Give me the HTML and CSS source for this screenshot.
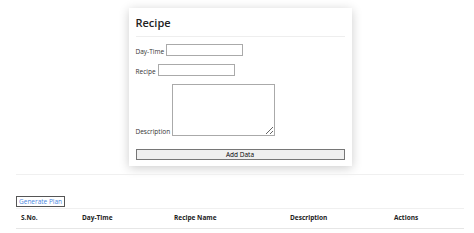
FILE: index.html
```html
<!DOCTYPE html>
<html>
<head>
    <title>Recipe Planner</title>
    <link rel="stylesheet" href="styles.css">
</head>
<body>
    <div class="page">
        <!-- Add recipe form -->
        <div class="card">
            <h2>Recipe</h2>
            <div class="field">
                <label>Day-Time</label><input type="text">
            </div>
            <div class="field">
                <label>Recipe</label><input type="text">
            </div>
            <div class="field desc">
                <label>Description</label><textarea></textarea>
            </div>
            <button class="add">Add Data</button>
        </div>

        <hr>

        <button class="gen">Generate Plan</button>

        <!-- Plan table -->
        <div class="table">
            <div class="th">S.No.</div>
            <div class="th">Day-Time</div>
            <div class="th">Recipe Name</div>
            <div class="th">Description</div>
            <div class="th">Actions</div>
        </div>
    </div>
</body>
</html>
```

FILE: styles.css
```css
* { box-sizing: border-box; }
body { margin: 0; font: 6.5px "Open Sans", sans-serif; color: #333; background: #fff; }
.page { width: 448px; margin-left: 16px; padding-top: 8px; }
.card { width: 223px; margin: 0 auto; padding: 5px 7px 6px; background: #fff; box-shadow: 0 2px 10px rgba(0,0,0,.2); }
h2 { font-size: 11px; font-weight: 600; color: #222; margin: 0 0 7px; padding: 2px 0 6px; border-bottom: 1px solid #eee; }
.field { display: flex; align-items: flex-end; gap: 2px; margin-bottom: 8px; }
.field label { line-height: 9px; }
.desc { margin-top: 1px; margin-bottom: 13px; }
input { width: 77px; height: 12px; border: 1px solid #aaa; padding: 0; font: inherit; }
textarea { width: 103px; height: 52px; border: 1px solid #aaa; padding: 0; font: inherit; }
.add { display: block; width: 100%; height: 11px; padding: 0; font: inherit; background: #efefef; border: 1px solid #767676; }
hr { border: 0; border-top: 1px solid #f0f0f0; margin: 8px 0 21px; }
.gen { font: inherit; color: #4a86e0; background: #fff; border: 1px solid #555; padding: 0 2px; height: 11px; }
.table { display: grid; grid-template-columns: 61px 92px 116px 104px 75px; border-top: 1px solid #f0f0f0; border-bottom: 1px solid #e6e6e6; margin-top: 1px; }
.th { font-weight: 700; color: #222; padding: 4px 5px 6px; }
```
